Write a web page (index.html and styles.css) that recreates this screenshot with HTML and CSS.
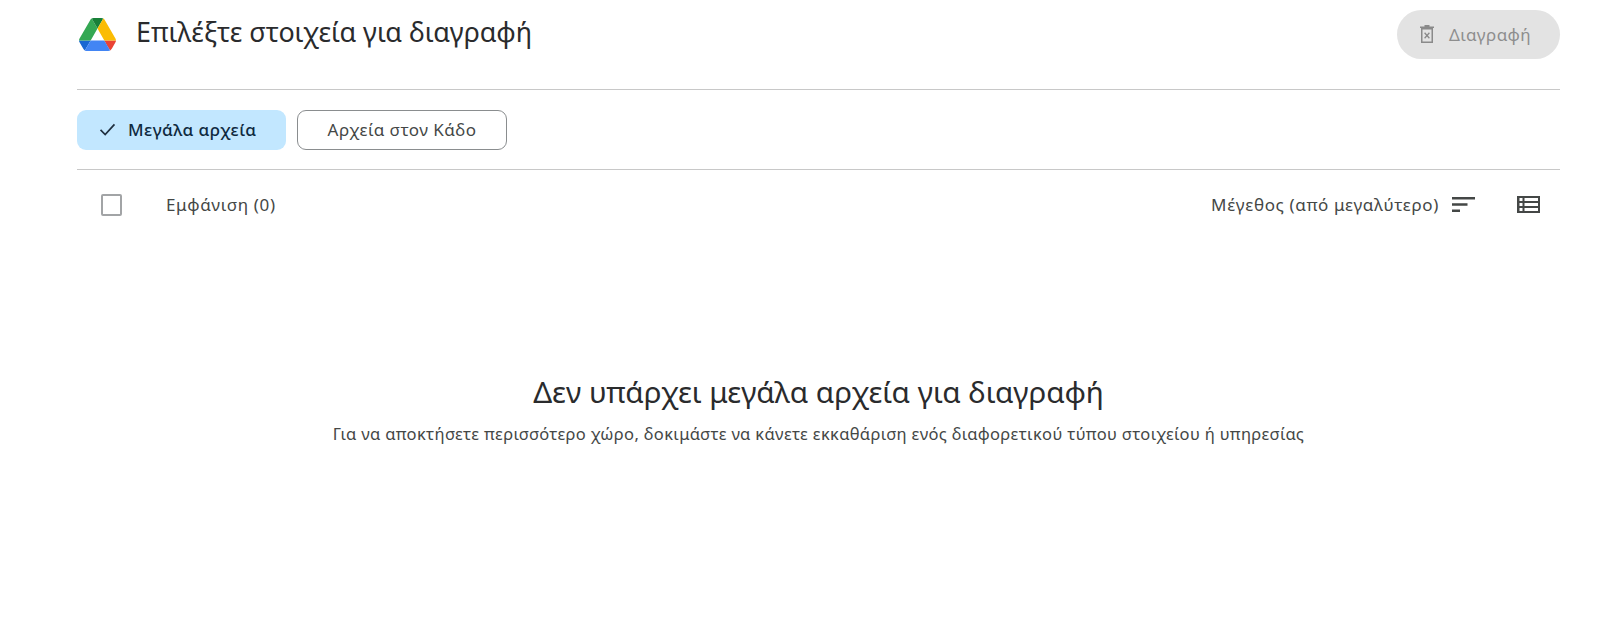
FILE: index.html
```html
<!DOCTYPE html>
<html lang="el">
<head>
<meta charset="utf-8">
<title>Επιλέξτε στοιχεία για διαγραφή</title>
<link rel="stylesheet" href="styles.css">
</head>
<body>
<main class="page">
  <header class="header">
    <div class="brand">
      <svg class="logo" viewBox="0 0 87.3 78" aria-hidden="true">
        <path d="m6.6 66.85 3.85 6.65c.8 1.4 1.95 2.5 3.3 3.3l13.75-23.8h-27.5c0 1.55.4 3.1 1.2 4.5z" fill="#1967d2"/>
        <path d="m43.65 25-13.75-23.8c-1.35.8-2.5 1.9-3.3 3.3l-25.4 44a9.06 9.06 0 0 0 -1.2 4.5h27.5z" fill="#34a853"/>
        <path d="m73.55 76.8c1.35-.8 2.5-1.9 3.3-3.3l1.6-2.75 7.65-13.25c.8-1.4 1.2-2.95 1.2-4.5h-27.502l5.852 11.5z" fill="#ea4335"/>
        <path d="m43.65 25 13.75-23.8c-1.35-.8-2.9-1.2-4.5-1.2h-18.5c-1.6 0-3.15.45-4.5 1.2z" fill="#188038"/>
        <path d="m59.8 53h-32.3l-13.75 23.8c1.35.8 2.9 1.2 4.5 1.2h50.8c1.6 0 3.15-.45 4.5-1.2z" fill="#4285f4"/>
        <path d="m73.4 26.5-12.7-22c-.8-1.4-1.95-2.5-3.3-3.3l-13.75 23.8 16.15 28h27.45c0-1.55-.4-3.1-1.2-4.5z" fill="#fbbc04"/>
      </svg>
      <h1 class="title">Επιλέξτε στοιχεία για διαγραφή</h1>
    </div>
    <button class="delete" type="button" disabled>
      <svg class="delete-icon" viewBox="0 0 14 18" aria-hidden="true">
        <path d="M4.500 0h5v1.500H14V3H0V1.500h4.500zM1 3h12v15H1zm1.500 1.500v12h9v-12z" fill="#8a8a8a" fill-rule="evenodd"/>
        <path d="m4.600 7.800 4.800 5.400m0-5.400-4.800 5.400" stroke="#8a8a8a" stroke-width="1.300" fill="none"/>
      </svg>
      <span>Διαγραφή</span>
    </button>
  </header>

  <nav class="chips">
    <button class="chip chip-active" type="button">
      <svg class="check" viewBox="0 0 18 14" aria-hidden="true"><path d="M1.500 7.500 6.500 12.500 16.500 1.500" fill="none" stroke="#1f2f3f" stroke-width="1.800"/></svg>
      <span>Μεγάλα αρχεία</span>
    </button>
    <button class="chip chip-outline" type="button">Αρχεία στον Κάδο</button>
  </nav>

  <section class="toolbar">
    <div class="toolbar-left">
      <span class="checkbox"></span>
      <span class="count">Εμφάνιση (0)</span>
    </div>
    <div class="toolbar-right">
      <span class="sort-label">Μέγεθος (από μεγαλύτερο)</span>
      <svg class="sort-icon" viewBox="0 0 23 15" aria-hidden="true"><path d="M0 0h23v2.400H0zM0 6.300h15.500v2.400H0zM0 12.600h8v2.400H0z" fill="#444746"/></svg>
      <svg class="list-icon" viewBox="0 0 23 17" aria-hidden="true"><path d="M0 0h23v17H0zM2.500 2v3h3V2zm5 0v3H21V2zM2.500 7v3h3V7zm5 0v3H21V7zM2.500 12v3h3v-3zm5 0v3H21v-3z" fill="#444746" fill-rule="evenodd"/></svg>
    </div>
  </section>

  <section class="empty">
    <h2 class="empty-title">Δεν υπάρχει μεγάλα αρχεία για διαγραφή</h2>
    <p class="empty-text">Για να αποκτήσετε περισσότερο χώρο, δοκιμάστε να κάνετε εκκαθάριση ενός διαφορετικού τύπου στοιχείου ή υπηρεσίας</p>
  </section>
</main>
</body>
</html>
```
FILE: styles.css
```css
* { box-sizing: border-box; }
html, body { margin: 0; height: 100%; background: #fff; overflow: hidden; }
body { font-family: "Noto Sans", "Open Sans", sans-serif; color: #1f1f1f; }
.page { padding: 0 40px 0 77px; }
.header {
  height: 90px;
  padding-top: 10px;
  display: flex;
  justify-content: space-between;
  align-items: flex-start;
  border-bottom: 1px solid #c8c8c8;
}
.brand { display: flex; align-items: center; height: 46px; margin-top: -1px; }
.logo { width: 37px; height: 33px; margin: 4px 20px 0 2px; }
.title { margin: 0; font-size: 26.850px; font-weight: 400; color: #2a2b2d; line-height: 46px; }
.delete {
  width: 163px;
  height: 49px;
  border: 0;
  border-radius: 25px;
  background: #e3e3e3;
  color: #8e8e8e;
  display: flex;
  align-items: center;
  padding: 0 0 1px 23px;
  font: 400 17px "Noto Sans", sans-serif;
  letter-spacing: .4px;
}
.delete-icon { width: 14px; height: 18px; margin-right: 15px; }
.chips {
  height: 80px;
  display: flex;
  align-items: center;
  gap: 11px;
  border-bottom: 1px solid #c8c8c8;
}
.chip {
  height: 40px;
  border-radius: 9px;
  font: 500 17px "Noto Sans", sans-serif;
  letter-spacing: .45px;
  display: flex;
  align-items: center;
  justify-content: center;
}
.chip-active { width: 209px; border: 0; background: #c2e7ff; color: #0f2a40; padding: 0 0 0 22px; justify-content: flex-start; }
.check { width: 17px; height: 13px; margin-right: 12px; }
.chip-outline { width: 210px; border: 1px solid #8a8d8f; background: #fff; color: #444746; font-weight: 400; }
.toolbar {
  height: 69px;
  display: flex;
  align-items: center;
  justify-content: space-between;
  font-size: 17px;
  letter-spacing: .65px;
  color: #444746;
}
.toolbar-left, .toolbar-right { display: flex; align-items: center; }
.checkbox {
  width: 21px;
  height: 22px;
  margin-left: 24px;
  margin-right: 44px;
  border: 2px solid #a2a4a6;
  border-radius: 2px;
}
.sort-icon { width: 23px; height: 15px; margin-left: 13px; margin-right: 42px; }
.list-icon { width: 23px; height: 17px; margin-right: 20px; }
.empty { margin-top: 133px; text-align: center; }
.empty-title { margin: 0; font-size: 29.600px; font-weight: 400; line-height: 40px; color: #2a2b2d; }
.empty-text { margin: 11px 0 0; font-size: 16.500px; letter-spacing: .34px; line-height: 22px; color: #444746; }
```
